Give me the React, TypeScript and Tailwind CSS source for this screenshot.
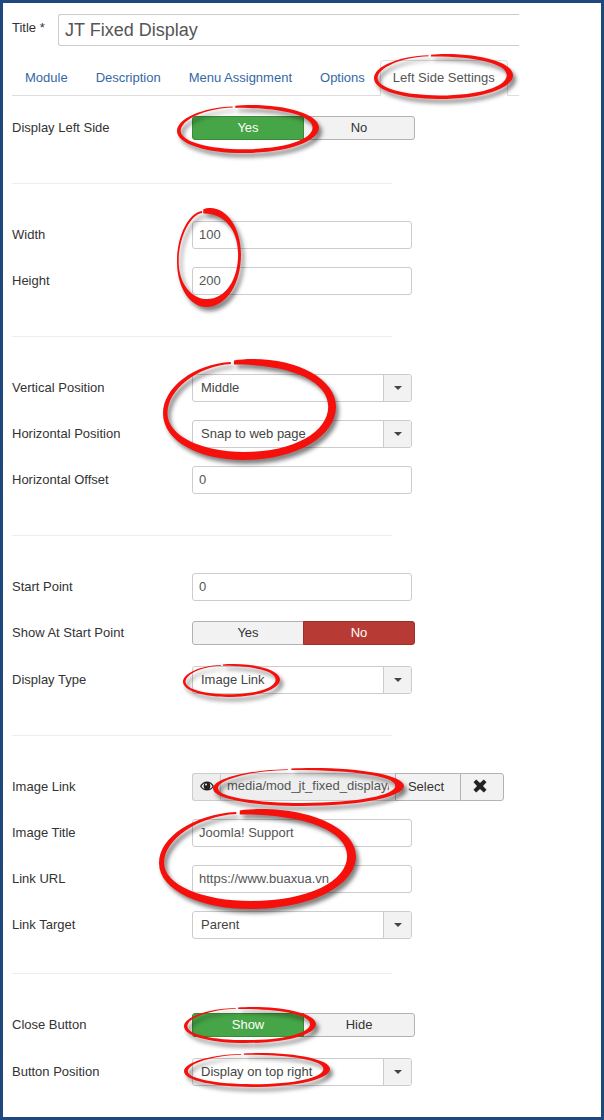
import { ReactNode, useState } from "react";

const Ring = ({ className }: { className: string }) => (
  <svg
    className={`absolute z-10 pointer-events-none overflow-visible max-w-none drop-shadow-[3px_4px_2px_rgba(0,0,0,0.5)] ${className}`}
    viewBox="0 0 100 100"
    preserveAspectRatio="none"
    aria-hidden="true"
  >
    <path
      fill="#f5100c"
      d="M39.2 3 C18 5 0 28 0 54 C0 82 22 100 46 100 C78 100 100 76 100 47 C100 20 78 0 52 0 C48 0 44 .5 41 1.5 L41 5.5 C74 5 95.5 22 95.5 47 C95.5 72 76 92 47 92 C22 92 2.6 76 2.6 54 C2.6 30 20 7 39.2 5 Z"
    />
  </svg>
);

const Row = ({
  label,
  htmlFor,
  children,
}: {
  label: string;
  htmlFor?: string;
  children: ReactNode;
}) => (
  <div className="flex items-start mb-[18px]">
    {htmlFor ? (
      <label htmlFor={htmlFor} className="w-[180px] shrink-0 pt-[5px]">
        {label}
      </label>
    ) : (
      <span className="w-[180px] shrink-0 pt-[5px]">{label}</span>
    )}
    <div className="relative">{children}</div>
  </div>
);

const TextField = ({ id, value }: { id: string; value: string }) => (
  <input
    id={id}
    type="text"
    defaultValue={value}
    className="block w-[220px] h-7 px-[6px] pb-[2px] border border-[#ccc] rounded-[3px] bg-white text-[#555]"
  />
);

const SelectField = ({ id, options }: { id: string; options: string[] }) => (
  <div className="relative w-[220px]">
    <select
      id={id}
      className="block appearance-none w-full h-7 pl-2 pr-8 border border-[#ccc] rounded-[3px] bg-white text-[#444]"
    >
      {options.map((option) => (
        <option key={option}>{option}</option>
      ))}
    </select>
    <span className="absolute right-px inset-y-px w-7 flex items-center justify-center border-l border-[#ccc] bg-[#f2f2f2] rounded-r-[2px] pointer-events-none">
      <svg width="8" height="4" viewBox="0 0 8 4" aria-hidden="true">
        <path d="M0 0h8L4 4z" fill="#444" />
      </svg>
    </span>
  </div>
);

const Switch = ({
  name,
  options,
  initial,
}: {
  name: string;
  options: [string, string];
  initial: number;
}) => {
  const [selected, setSelected] = useState(initial);
  const activeStyle = [
    "z-[1] bg-[#46a546] border-[#3a8a3a] text-white",
    "z-[1] bg-[#b83a34] border-[#99302b] text-white",
  ];
  return (
    <div className="flex h-[29px] pt-[2px]" role="radiogroup" aria-label={name}>
      {options.map((option, i) => (
        <label
          key={option}
          className={`relative w-28 h-6 flex items-center justify-center border cursor-pointer ${
            i === 0 ? "rounded-l-[3px]" : "-ml-px rounded-r-[3px]"
          } ${
            selected === i
              ? activeStyle[i]
              : "bg-[#f2f2f2] border-[#b3b3b3] text-[#333]"
          }`}
        >
          <input
            type="radio"
            name={name}
            checked={selected === i}
            onChange={() => setSelected(i)}
            className="sr-only"
          />
          {option}
        </label>
      ))}
    </div>
  );
};

const Divider = ({ className = "mt-[41px]" }: { className?: string }) => (
  <hr className={`max-w-[380px] border-[#eee] mb-[37px] ${className}`} />
);

const tabs = ["Module", "Description", "Menu Assignment", "Options"];

const App = () => {
  return (
    <form
      onSubmit={(e) => e.preventDefault()}
      className="min-h-screen border-[3px] border-[#1f497d] bg-white px-[9px] pt-[11px] pb-3 font-['Liberation_Sans',Arial,sans-serif] text-[13px] leading-[18px] text-[#333]"
    >
      <div className="flex items-start max-w-[507px]">
        <label htmlFor="title" className="w-[46px] shrink-0 pt-[5px]">
          Title *
        </label>
        <input
          id="title"
          type="text"
          defaultValue="JT Fixed Display"
          className="flex-1 min-w-0 h-8 px-[6px] border border-r-0 border-[#ccc] rounded-l-[3px] text-lg text-[#555]"
        />
      </div>

      <nav className="flex max-w-[507px] mt-[14px] border-b border-[#ddd]">
        {tabs.map((tab) => (
          <a
            key={tab}
            href="#"
            className="mr-[2px] px-[13px] pt-[9px] pb-2 text-[#3468a5] whitespace-nowrap"
          >
            {tab}
          </a>
        ))}
        <a
          href="#"
          aria-current="page"
          className="relative -mb-px px-3 pt-2 pb-2 border border-[#ddd] border-b-white rounded-t-[4px] bg-white text-[#555] whitespace-nowrap"
        >
          Left Side Settings
          <Ring className="-left-[7px] -top-[7px] w-[139px] h-[45px]" />
        </a>
      </nav>

      <div className="pt-[18px]">
        <Row label="Display Left Side">
          <Switch name="Display Left Side" options={["Yes", "No"]} initial={0} />
          <Ring className="-left-[15px] -top-[9px] w-[142px] h-12" />
        </Row>
        <Divider className="mt-10" />

        <Row label="Width" htmlFor="width">
          <TextField id="width" value="100" />
          <Ring className="-left-[15px] -top-[13px] w-16 h-[99px]" />
        </Row>
        <Row label="Height" htmlFor="height">
          <TextField id="height" value="200" />
        </Row>
        <Divider />

        <Row label="Vertical Position" htmlFor="vertical">
          <SelectField id="vertical" options={["Middle", "Top", "Bottom"]} />
          <Ring className="-left-[29px] -top-[15px] w-[173px] h-[101px]" />
        </Row>
        <Row label="Horizontal Position" htmlFor="horizontal">
          <SelectField id="horizontal" options={["Snap to web page"]} />
        </Row>
        <Row label="Horizontal Offset" htmlFor="offset">
          <TextField id="offset" value="0" />
        </Row>
        <Divider />

        <Row label="Start Point" htmlFor="start">
          <TextField id="start" value="0" />
        </Row>
        <Row label="Show At Start Point">
          <Switch name="Show At Start Point" options={["Yes", "No"]} initial={1} />
        </Row>
        <Row label="Display Type" htmlFor="type">
          <SelectField id="type" options={["Image Link"]} />
          <Ring className="-left-[9px] -top-[2px] w-[97px] h-[33px]" />
        </Row>
        <Divider />

        <Row label="Image Link" htmlFor="image">
          <div className="flex h-7">
            <span className="w-7 flex items-center justify-center pb-[2px] border border-r-0 border-[#ccc] rounded-l-[3px] bg-[#eee]">
              <svg width="14" height="10" viewBox="0 0 14 10" aria-hidden="true">
                <path
                  d="M0 5.2C1.6 2 4 .4 7 .4s5.400 1.600 7 4.800C12.400 8 10 9.600 7 9.600S1.600 8 0 5.200z"
                  fill="#222"
                />
                <path
                  d="M1.500 5.200C2.300 3.700 3.300 2.700 4.500 2.200 3.300 4.200 3.400 6.400 4.700 8 3.300 7.500 2.300 6.600 1.500 5.200zM12.500 5.200C11.700 3.700 10.700 2.700 9.500 2.200c1.200 2 1.100 4.200-.2 5.800 1.400-.5 2.400-1.400 3.200-2.800z"
                  fill="#eee"
                />
                <circle cx="6" cy="3.600" r="1" fill="#eee" />
              </svg>
            </span>
            <input
              id="image"
              type="text"
              readOnly
              value="media/mod_jt_fixed_display/"
              className="w-[175px] px-[6px] pb-[2px] border border-r-0 border-[#ccc] bg-[#eee] text-[#555]"
            />
            <button
              type="button"
              className="w-[66px] pr-1 border border-[#b3b3b3] bg-[#f2f2f2]"
            >
              Select
            </button>
            <button
              type="button"
              aria-label="Clear"
              className="w-11 -ml-px pr-1 pb-[2px] flex items-center justify-center border border-[#b3b3b3] rounded-r-[3px] bg-[#f2f2f2]"
            >
              <svg width="14" height="14" viewBox="0 0 14 14" aria-hidden="true">
                <path
                  d="M3.2.5 7 4 10.800.5 13.500 3.200 10 7l3.500 3.800-2.700 2.700L7 10l-3.800 3.500L.5 10.800 4 7 .5 3.200z"
                  fill="#222"
                />
              </svg>
            </button>
          </div>
          <Ring className="left-[21px] -top-[5px] w-[191px] h-[38px]" />
        </Row>
        <Row label="Image Title" htmlFor="image-title">
          <TextField id="image-title" value="Joomla! Support" />
          <Ring className="-left-[33px] -top-[10px] w-[197px] h-[100px]" />
        </Row>
        <Row label="Link URL" htmlFor="url">
          <TextField id="url" value="https://www.buaxua.vn" />
        </Row>
        <Row label="Link Target" htmlFor="target">
          <SelectField id="target" options={["Parent", "New Window"]} />
        </Row>
        <Divider className="mt-[34px]" />

        <Row label="Close Button">
          <Switch name="Close Button" options={["Show", "Hide"]} initial={0} />
          <Ring className="-left-2 -top-1 w-[132px] h-9" />
        </Row>
        <Row label="Button Position" htmlFor="button-position">
          <SelectField id="button-position" options={["Display on top right"]} />
          <Ring className="-left-2 -top-[5px] w-[146px] h-[34px]" />
        </Row>
      </div>
    </form>
  );
};

export default App;
